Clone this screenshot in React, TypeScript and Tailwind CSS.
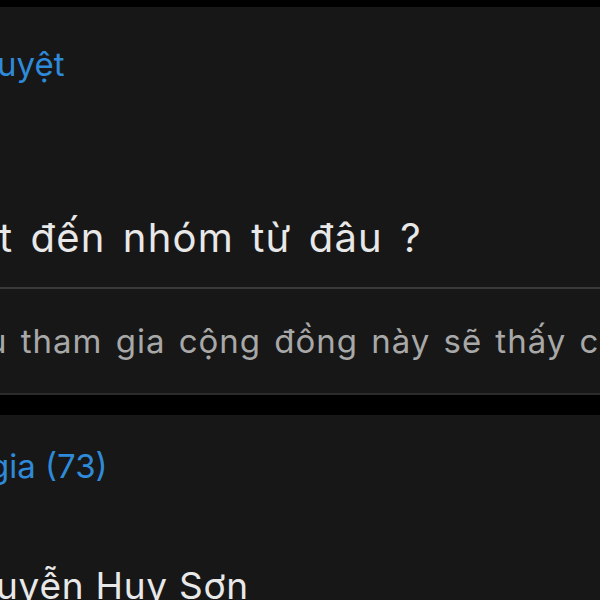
import React from 'react';

const font = { fontFamily: 'Inter, "Noto Sans", sans-serif' };

export default function App() {
    return (
        <div className="w-[600px] h-[600px] overflow-hidden bg-black" style={font}>
            <div className="h-[7px] bg-black"></div>

            {/* Question panel */}
            <section className="bg-[#171717] pt-[37px] border-b-2 border-[#2b2b2b] overflow-hidden">
                <div className="-ml-[3px] text-[33px] leading-[40px] text-[#2f8ad9] whitespace-nowrap">uyệt</div>
                <div className="mt-[130px] -ml-[1px] text-[40px] leading-[48px] tracking-[0.03em] [word-spacing:0.12em] text-[#e8e8e8] whitespace-nowrap">
                    t đến nhóm từ đâu ?
                </div>
                <div className="mt-[25px] h-[2px] bg-[#3a3a3a]"></div>
                <div className="mt-[32px] pb-[32px] -ml-[13px] text-[33px] leading-[40px] tracking-[0.03em] [word-spacing:0.09em] text-[#a8a8a8] whitespace-nowrap">
                    u tham gia cộng đồng này sẽ thấy câu hỏi
                </div>
            </section>

            <div className="h-[20px] bg-black"></div>

            {/* Members panel */}
            <section className="bg-[#171717] pt-[31px] h-[300px] overflow-hidden">
                <div className="-ml-[11px] text-[33px] leading-[40px] text-[#2f8ad9] whitespace-nowrap">gia (73)</div>
                <div className="mt-[78px] -ml-[4px] text-[37px] leading-[44px] tracking-[0.02em] text-[#e8e8e8] whitespace-nowrap">
                    uyễn Huy Sơn
                </div>
            </section>
        </div>
    );
}
